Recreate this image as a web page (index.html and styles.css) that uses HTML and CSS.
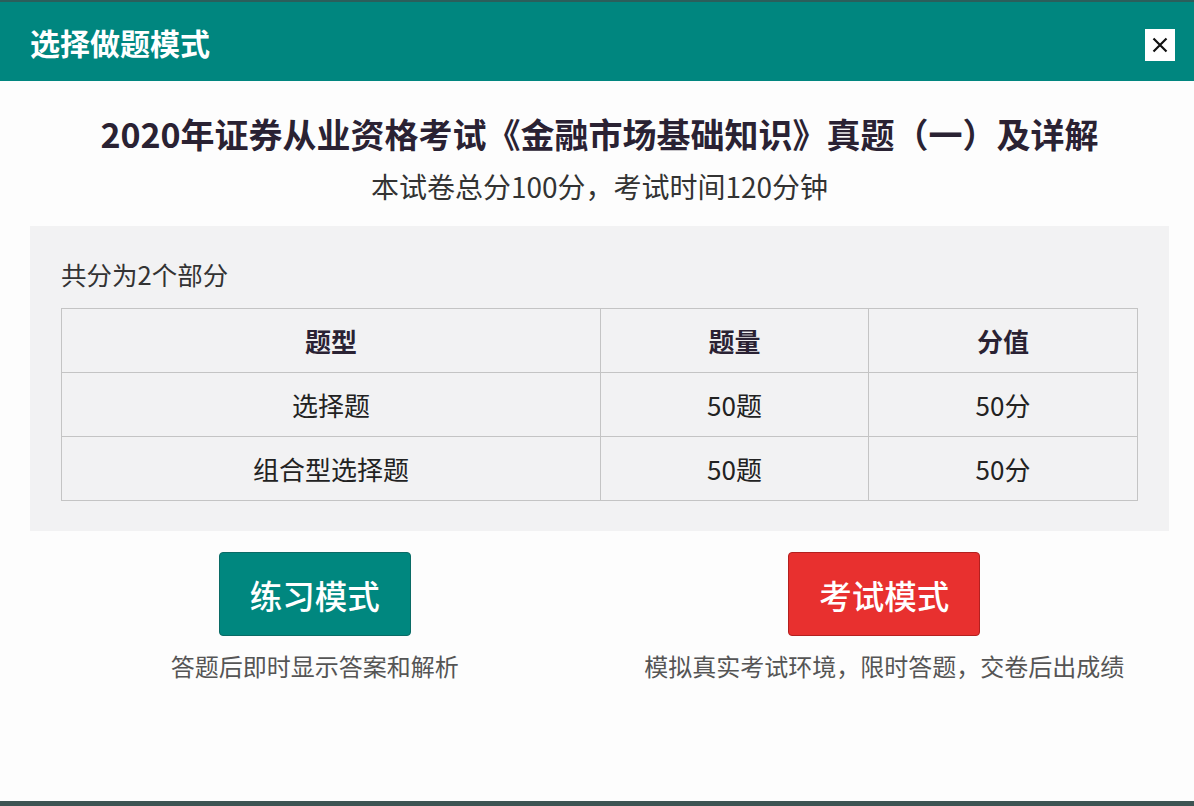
FILE: index.html
```html
<!DOCTYPE html>
<html lang="zh-CN">
<head>
<meta charset="utf-8">
<title>选择做题模式</title>
<link rel="stylesheet" href="styles.css">
</head>
<body>
<div class="dialog">
  <header class="head">
    <h1 class="head-title">选择做题模式</h1>
    <button class="close" aria-label="关闭">
      <svg viewBox="0 0 20 20" width="20" height="20"><path d="M3.5 3.5 L16.5 16.5 M16.5 3.5 L3.5 16.5" stroke="#111" stroke-width="2.2" fill="none"/></svg>
    </button>
  </header>
  <main class="body">
    <h2 class="paper-title">2020年证券从业资格考试《金融市场基础知识》真题（一）及详解</h2>
    <p class="paper-sub">本试卷总分100分，考试时间120分钟</p>
    <section class="panel">
      <p class="panel-label">共分为2个部分</p>
      <table class="parts">
        <colgroup><col class="c1"><col class="c2"><col class="c3"></colgroup>
        <thead>
          <tr><th>题型</th><th>题量</th><th>分值</th></tr>
        </thead>
        <tbody>
          <tr><td>选择题</td><td>50题</td><td>50分</td></tr>
          <tr><td>组合型选择题</td><td>50题</td><td>50分</td></tr>
        </tbody>
      </table>
    </section>
    <div class="modes">
      <div class="mode">
        <button class="btn btn-practice">练习模式</button>
        <p class="mode-desc">答题后即时显示答案和解析</p>
      </div>
      <div class="mode">
        <button class="btn btn-exam">考试模式</button>
        <p class="mode-desc">模拟真实考试环境，限时答题，交卷后出成绩</p>
      </div>
    </div>
  </main>
  <div class="foot"></div>
</div>
</body>
</html>
```
FILE: styles.css
```css
* { box-sizing: border-box; }
html, body { margin: 0; padding: 0; }
body {
  width: 1194px;
  height: 806px;
  overflow: hidden;
  background: #fdfdfd;
  font-family: "Noto Sans CJK SC", "Noto Sans", sans-serif;
  color: #222;
}
.dialog {
  height: 806px;
  display: flex;
  flex-direction: column;
}
.head {
  height: 81px;
  background: #00867f;
  border-top: 2px solid #2b5e5b;
  display: flex;
  align-items: center;
  justify-content: space-between;
  padding: 0 19px 0 30px;
}
.head-title {
  margin: 0;
  color: #fff;
  font-size: 30px;
  font-weight: 700;
}
.close {
  width: 30px;
  height: 32px;
  margin-top: 6px;
  background: #fff;
  border: none;
  padding: 0;
  display: flex;
  align-items: center;
  justify-content: center;
}
.body {
  flex: 1;
  padding: 0 25px 0 30px;
}
.paper-title {
  margin: 30px 0 0;
  text-align: center;
  font-size: 34px;
  font-weight: 700;
  color: #2a2233;
  line-height: 46px;
}
.paper-sub {
  margin: 9px 0 0;
  text-align: center;
  font-size: 28px;
  color: #333;
  line-height: 40px;
}
.panel {
  margin-top: 20px;
  background: #f2f2f3;
  padding: 30px 31px 30px 31px;
}
.panel-label {
  margin: 0 0 16px;
  font-size: 25.5px;
  line-height: 36px;
  color: #333;
}
.parts {
  width: 100%;
  border-collapse: collapse;
  font-size: 26px;
  color: #222;
}
.parts .c1 { width: 539px; }
.parts .c2 { width: 268px; }
.parts th, .parts td {
  border: 1px solid #c4c4c4;
  height: 64px;
  text-align: center;
  padding: 0;
}
.parts th { font-weight: 700; color: #2a2233; }
.modes {
  display: flex;
  margin-top: 21px;
}
.mode {
  flex: 1;
  display: flex;
  flex-direction: column;
  align-items: center;
}
.btn {
  width: 192px;
  height: 84px;
  border-radius: 4px;
  color: #fff;
  font-family: inherit;
  font-size: 32.5px;
  font-weight: 500;
  cursor: pointer;
}
.btn-practice { background: #00877f; border: 1px solid #0a6b66; }
.btn-exam { background: #e8302f; border: 1px solid #b3201f; }
.mode-desc {
  margin: 12px 0 0;
  font-size: 24px;
  line-height: 36px;
  color: #555;
}
.foot {
  height: 5px;
  background: #3d5453;
}
```
